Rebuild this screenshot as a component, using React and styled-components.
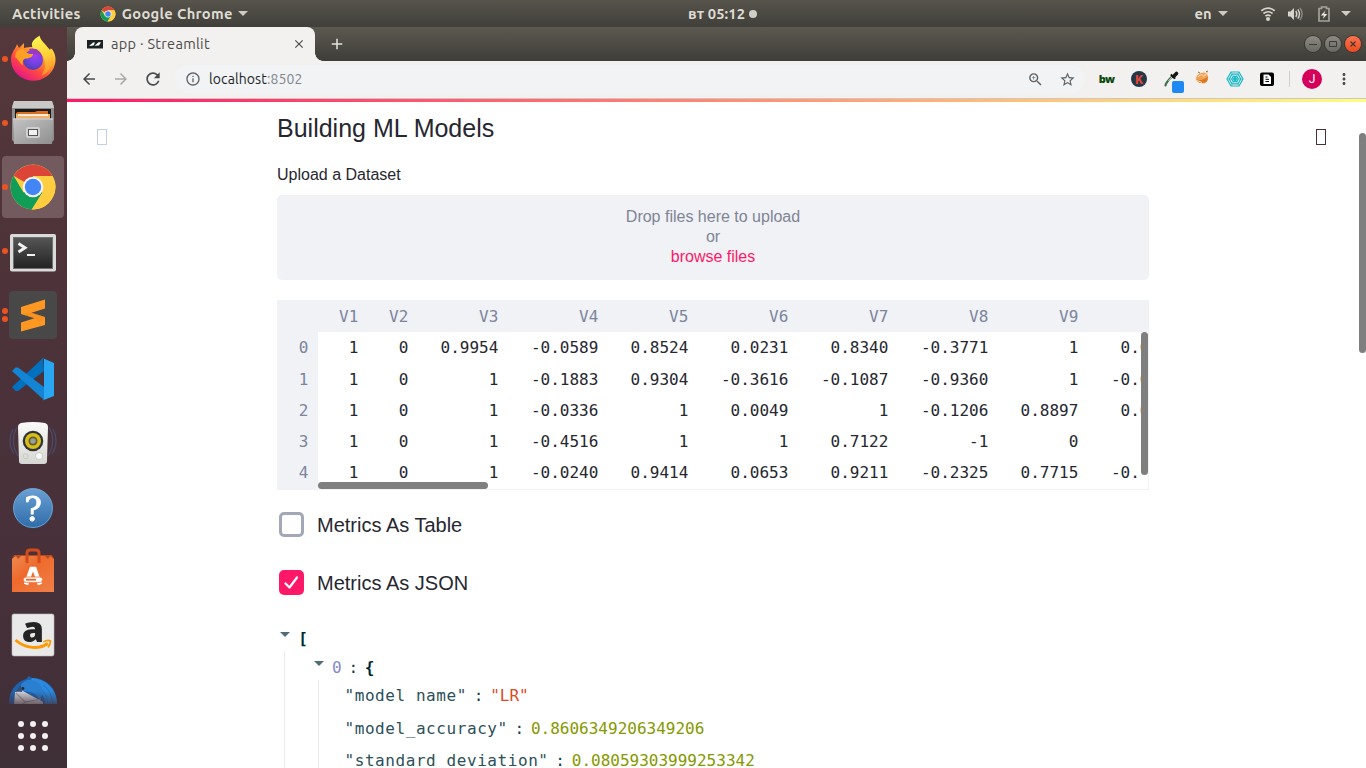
import React from "react";
import styled, { createGlobalStyle } from "styled-components";
import {
  MdArrowBack,
  MdArrowForward,
  MdRefresh,
  MdInfoOutline,
  MdZoomIn,
  MdStarBorder,
  MdMoreVert,
  MdClose,
  MdAdd,
} from "react-icons/md";

const uiFont = `"Ubuntu", "Noto Sans", "Open Sans", sans-serif`;
const bodyFont = `"Liberation Sans", Arial, sans-serif`;
const monoFont = `"DejaVu Sans Mono", monospace`;
const pink = "#ff1868";

const GlobalStyle = createGlobalStyle`
  * { box-sizing: border-box; }
  html, body { margin: 0; padding: 0; overflow: hidden; background: #fff; }
  svg { display: block; flex: none; }
`;

/* ---------- desktop ---------- */

const Desktop = styled.div`
  width: 1366px;
  height: 768px;
  display: flex;
  flex-direction: column;
  overflow: hidden;
`;

const TopBar = styled.header`
  height: 27px;
  flex: none;
  display: grid;
  grid-template-columns: 1fr auto 1fr;
  align-items: center;
  padding: 0 15px 0 12px;
  background: linear-gradient(#56544b, #403f3a);
  color: #dfdbd2;
  font: 600 14.7px/27px ${uiFont};
`;

const BarGroup = styled.div`
  display: flex;
  align-items: center;
  justify-content: ${(p) => (p.$end ? "flex-end" : "flex-start")};
  white-space: nowrap;
`;

const BarText = styled.span`
  margin-left: ${(p) => p.$left || 0}px;
  letter-spacing: ${(p) => p.$track || 0}px;
`;

const DownArrow = styled.i`
  width: 0;
  height: 0;
  border: 5px solid transparent;
  border-top-color: #d0ccc4;
  border-bottom: 0;
  margin-left: ${(p) => p.$left || 0}px;
`;

const Clock = styled.div`
  display: flex;
  align-items: center;
  gap: 4px;
  white-space: nowrap;
  margin-left: 82px;
  letter-spacing: 0.1px;
`;

const ClockDot = styled.i`
  width: 8px;
  height: 8px;
  border-radius: 50%;
  background: #d0cec9;
`;

const StatusIcons = styled.div`
  display: flex;
  align-items: center;
  gap: 12.5px;
  margin-left: 32px;
`;

const Main = styled.div`
  flex: 1;
  min-height: 0;
  display: flex;
`;

/* ---------- dock ---------- */

const Dock = styled.nav`
  width: 67px;
  flex: none;
  display: flex;
  flex-direction: column;
  background: linear-gradient(#54383b, #4e3339 30%, #46303a 78%, #3f2f36);
`;

const DockList = styled.div`
  height: 677px;
  overflow: hidden;
  display: flex;
  flex-direction: column;
  mask-image: linear-gradient(#000 664px, rgba(0, 0, 0, 0.3));
`;

const DockItem = styled.div`
  height: 64px;
  flex: none;
  display: flex;
  align-items: center;
  padding: 1px 3px 1px 2px;
`;

const DockTile = styled.div`
  height: 62px;
  flex: 1;
  display: flex;
  align-items: center;
  border-radius: 4px;
  background: ${(p) => (p.$active ? "#725a5f" : "transparent")};
`;

const Running = styled.span`
  width: 7px;
  display: flex;
  flex-direction: column;
  gap: 2px;
`;

const RunDot = styled.i`
  width: 6px;
  height: 6px;
  border-radius: 50%;
  background: #e95420;
`;

const AppsButton = styled.div`
  flex: 1;
  display: grid;
  grid-template-columns: repeat(3, 6px);
  grid-auto-rows: 6px;
  gap: 6px;
  justify-content: center;
  align-content: center;
  padding-right: 1px;
`;

const AppsDot = styled.i`
  border-radius: 50%;
  background: #f2f1f0;
`;

/* ---------- browser window ---------- */

const Window = styled.div`
  flex: 1;
  min-width: 0;
  display: flex;
  flex-direction: column;
`;

const TabStrip = styled.div`
  height: 34px;
  flex: none;
  display: flex;
  align-items: center;
  padding: 0 5px 0 8px;
  background: linear-gradient(#5c5950, #3e3d38);
`;

const Tab = styled.div`
  position: relative;
  width: 240px;
  height: 34px;
  display: flex;
  align-items: center;
  padding: 0 9px 0 12px;
  border-radius: 8px 8px 0 0;
  background: #f2f1f0;
  color: #4c4c4a;
  font: 14.5px/34px ${uiFont};

  &::before,
  &::after {
    content: "";
    position: absolute;
    bottom: 0;
    width: 8px;
    height: 8px;
  }
  &::before {
    left: -8px;
    background: radial-gradient(circle at 0 0, transparent 7.5px, #f2f1f0 8px);
  }
  &::after {
    right: -8px;
    background: radial-gradient(circle at 100% 0, transparent 7.5px, #f2f1f0 8px);
  }
`;

const TabTitle = styled.span`
  flex: 1;
  margin-left: 8px;
  letter-spacing: 0.3px;
`;

const NewTab = styled.div`
  flex: 1;
  padding-left: 13px;
  color: #e6e4e0;
`;

const WindowButtons = styled.div`
  display: flex;
  gap: 4px;
`;

const WindowButton = styled.span`
  width: 16px;
  height: 16px;
  border-radius: 50%;
  display: flex;
  align-items: center;
  justify-content: center;
  color: #3b3a36;
  background: ${(p) => (p.$close ? "linear-gradient(#fa7450, #ee4a1c)" : "linear-gradient(#8c8a82, #6b6963)")};
  box-shadow: 0 0 0 1px #373632;
`;

const Toolbar = styled.div`
  height: 38px;
  flex: none;
  display: flex;
  align-items: center;
  padding: 0 13px 1px;
  background: #f2f1f0;
  border-bottom: 1px solid #c9c8c7;
  color: #4b4c4d;
`;

const NavIcons = styled.div`
  display: flex;
  align-items: center;
  gap: 13.5px;
  color: #48494b;
`;

const Faded = styled.span`
  color: #a9a9a9;
`;

const Omnibox = styled.div`
  width: 910px;
  flex: none;
  height: 28px;
  margin-left: 12px;
  padding: 0 9.5px 0 10px;
  border-radius: 14px;
  display: flex;
  align-items: center;
  gap: 8px;
  background: #f1f3f5;
  color: #5f6368;
  font: 14px/28px ${uiFont};
`;

const Address = styled.span`
  flex: 1;
  color: #222427;
  letter-spacing: 0.1px;
`;

const Port = styled.span`
  color: #80858b;
`;

const OmniActions = styled.div`
  display: flex;
  gap: 15px;
`;

const Extensions = styled.div`
  display: flex;
  align-items: center;
  gap: 12px;
  margin-left: 12px;
`;

const Avatar = styled.span`
  width: 20px;
  height: 20px;
  margin-right: 13px;
  border-radius: 50%;
  background: #d5005a;
  color: #fff;
  font: 12px/20px Roboto, sans-serif;
  text-align: center;
`;

const Divider = styled.i`
  width: 1px;
  height: 16px;
  margin: 0 12px;
  background: #cfcfcf;
`;

const ProgressLine = styled.div`
  height: 3px;
  flex: none;
  background: linear-gradient(90deg, ${pink}, #fffd80);
`;

/* ---------- page ---------- */

const Page = styled.main`
  position: relative;
  flex: 1;
  min-height: 0;
  overflow: hidden;
  display: flex;
  background: #fff;
  color: #262730;
  font: 16px/24px ${bodyFont};
`;

const PageScroll = styled.i`
  position: absolute;
  right: 0;
  top: 31px;
  width: 7px;
  height: 220px;
  border-radius: 4px;
  background: #7f7f7f;
`;

const MissingGlyph = styled.i`
  width: 10px;
  height: 16px;
  flex: none;
  margin: 27px 0 0 ${(p) => p.$left}px;
  border: 1px solid ${(p) => p.$color};
`;

const Column = styled.section`
  width: 872px;
  flex: none;
  margin-left: 170px;
`;

const Heading = styled.h2`
  margin: 10px 0 0;
  font: 25px/32px ${bodyFont};
`;

const Label = styled.div`
  margin: 19px 0 0;
  line-height: 24px;
`;

const Dropzone = styled.div`
  height: 85px;
  margin-top: 8px;
  padding: 12px 0 0;
  border-radius: 5px;
  background: #f0f2f6;
  color: #808495;
  line-height: 20px;
  text-align: center;
`;

const Browse = styled.div`
  color: ${pink};
`;

const Frame = styled.div`
  position: relative;
  height: 190px;
  margin-top: 20px;
  overflow: hidden;
  border: 1px solid #f0f2f6;
  border-width: 0 1px 1px 0;
  font: 16px/31px ${monoFont};
`;

const FrameRow = styled.div`
  display: grid;
  grid-template-columns: 41px 50px 50px 90px 100px 90px 100px 100px 100px 90px 100px;
  width: 911px;
  height: ${(p) => p.$h || 31}px;
  background: ${(p) => (p.$head ? "#f0f2f6" : "#fff")};
  color: ${(p) => (p.$head ? "#7c859c" : "#262730")};
  ${(p) => p.$head && "line-height: 33px;"}
`;

const FrameCell = styled.span`
  padding-right: 9.7px;
  text-align: right;
  ${(p) => p.$index && "background: #f0f2f6; color: #7c859c;"}
`;

const Scrollbar = styled.div`
  position: absolute;
  background: #fff;
  ${(p) =>
    p.$vertical
      ? "right: 0; top: 32px; width: 7px; height: 150px;"
      : "left: 41px; right: 0; bottom: 0; height: 7px;"}
`;

const Thumb = styled.i`
  display: block;
  width: ${(p) => p.$w}px;
  height: ${(p) => p.$h}px;
  border-radius: 4px;
  background: #7f7f7f;
`;

const CheckRow = styled.label`
  display: flex;
  align-items: center;
  gap: 13px;
  height: 25px;
  margin: ${(p) => p.$top}px 0 0 2px;
  font-size: 20px;
`;

const CheckBox = styled.span`
  width: 25px;
  height: 25px;
  border-radius: 5px;
  display: flex;
  align-items: center;
  justify-content: center;
  border: ${(p) => (p.$on ? "0" : "3px solid #a3a8b8")};
  background: ${(p) => (p.$on ? pink : "#fff")};
`;

const Tree = styled.div`
  margin: 29px 0 0 3px;
  font: 16px/28px ${monoFont};
`;

const TreeLine = styled.div`
  display: flex;
  height: ${(p) => p.$h || 28}px;
  line-height: ${(p) => p.$lh || p.$h}px;
  white-space: pre;
`;

const TreeNest = styled.div`
  margin-left: 4px;
  padding-left: ${(p) => p.$pad}px;
  border-left: 1px solid #ebebeb;
`;

const Caret = styled.i`
  width: 0;
  height: 0;
  margin: ${(p) => p.$top}px ${(p) => p.$right}px 0 0;
  border: 5px solid transparent;
  border-top-color: #516d74;
  border-bottom: 0;
`;

const Brace = styled.b`
  color: #002b36;
`;

const Colon = styled.span`
  width: 23.2px;
  text-align: center;
  color: #12404c;
`;

const Key = styled.span`
  letter-spacing: 0.57px;
  color: #2c4f59;
`;

const Value = styled.span`
  color: ${(p) => (p.$kind === "string" ? "#dc4a1e" : p.$kind === "index" ? "#8488cf" : "#859900")};
`;

/* ---------- drawings ---------- */

function ChromeIcon({ size }) {
  return (
    <svg width={size} height={size} viewBox="0 0 48 48">
      <circle cx="24" cy="24" r="22.5" fill="#ffcd40" />
      <path d="M24 24 4.6 12.8A22.5 22.5 0 0 1 43.5 13H24z" fill="#db4437" />
      <path d="M4.6 12.8A22.5 22.5 0 0 0 22.8 46.4L33.5 29.5 24 24 14.5 29.5z" fill="#0f9d58" />
      <path d="M24 13h19.5A22.5 22.5 0 0 1 22.8 46.4L33.5 29.5z" fill="#ffcd40" />
      <circle cx="24" cy="24" r="10.3" fill="#f4f4f4" />
      <circle cx="24" cy="24" r="8.2" fill="#4285f4" />
    </svg>
  );
}

function FirefoxIcon() {
  return (
    <svg width="48" height="48" viewBox="0 0 48 48">
      <defs>
        <linearGradient id="ffBody" x1="0.85" y1="0.1" x2="0.25" y2="0.95">
          <stop offset="0" stopColor="#fff44f" />
          <stop offset="0.35" stopColor="#ffa22c" />
          <stop offset="0.68" stopColor="#ff4a3f" />
          <stop offset="1" stopColor="#e5168a" />
        </linearGradient>
        <linearGradient id="ffTail" x1="0.4" y1="0" x2="0.7" y2="1">
          <stop offset="0" stopColor="#fff44f" />
          <stop offset="0.5" stopColor="#ffd23a" />
          <stop offset="1" stopColor="#ff8a28" />
        </linearGradient>
        <radialGradient id="ffGlobe" cx="0.6" cy="0.3" r="0.75">
          <stop offset="0" stopColor="#a43cf0" />
          <stop offset="0.5" stopColor="#7542e5" />
          <stop offset="1" stopColor="#4a3fae" />
        </radialGradient>
      </defs>
      <path
        d="M4 17c1-3 3-4 4-8l2 4 5-5v5c3-1 6-1 9-1 3 0 3-6 6-9 3 6 8 8 11 12l2-1c4 6 4 11 3 15A22.300 21.500 0 0 1 2 26c0-4 0-6 2-9z"
        fill="url(#ffBody)"
      />
      <path d="M23 11c-1-6 5-8 7.500-10.500 1 6 7.500 8.500 10 15.500l1.500-3c6 13 1 23-10 28 6-8 5-16 1-21-3-4-9-4-10-9z" fill="url(#ffTail)" />
      <circle cx="24" cy="25" r="10" fill="url(#ffGlobe)" />
      <path d="M6 22c1-7 4-8 8-8 3 1 2 4 7 5h3c0 3-4 4.500-7 4.500-3 .5-4 3-3 6.500-4-1-4-6-8-8z" fill="#ff9f24" />
      <path d="M20 14c6-2 12 1 14 9-2-3-4-4-8-4-3 0-5-2-6-5z" fill="#9b3aba" />
    </svg>
  );
}

function FilesIcon() {
  return (
    <svg width="48" height="48" viewBox="0 0 48 48">
      <defs>
        <linearGradient id="fileFront" x1="0" y1="0" x2="1" y2="1">
          <stop offset="0" stopColor="#c4c4c4" />
          <stop offset="1" stopColor="#8f8f8f" />
        </linearGradient>
      </defs>
      <path d="M5 2h38l2 5v34l-2 2H5l-2-2V7z" fill="#8d8d8d" />
      <path d="M5 2h38l2 7H3z" fill="#c9c9c9" />
      <path d="M6 10h36v12H6z" fill="#1b1b1b" />
      <path d="M9 13h17l2-1h11v8H7v-6z" fill="#d9701f" />
      <path d="M7 15h34v5H7z" fill="#f0b16a" />
      <path d="M9 15.300h30v1.500H9z" fill="#fff" />
      <path d="M4 19.500h40L43 45H5z" fill="url(#fileFront)" />
      <path d="M4 19.500h40v1H4z" fill="#d8d8d8" />
      <rect x="17" y="28" width="14" height="11" rx="2" fill="#cfcfcf" />
      <rect x="19.500" y="30.500" width="9" height="6" fill="#f1f1f1" stroke="#555" />
    </svg>
  );
}

function TerminalIcon() {
  return (
    <svg width="48" height="48" viewBox="0 0 48 48">
      <defs>
        <linearGradient id="term" x1="0" y1="0" x2="0" y2="1">
          <stop offset="0" stopColor="#555" />
          <stop offset="1" stopColor="#242424" />
        </linearGradient>
      </defs>
      <rect x="1" y="7" width="46" height="37.500" rx="2" fill="#dadada" />
      <rect x="4" y="10" width="40" height="32" fill="#707070" />
      <rect x="5" y="11" width="38" height="30" fill="url(#term)" />
      <path d="M9.500 16.500l6.500 4.300-6.500 4.300" fill="none" stroke="#f2f2f2" strokeWidth="3" />
      <path d="M18 28h8" stroke="#f2f2f2" strokeWidth="2" />
    </svg>
  );
}

function SublimeIcon() {
  return (
    <svg width="48" height="48" viewBox="0 0 48 48">
      <rect width="48" height="48" rx="4" fill="#484848" />
      <path d="M12 16L36 8.500v9L22.500 21.700 36 26v8L12 40.500v-9l13.500-4.200L12 23z" fill="#ff9822" />
      <path d="M22.500 21.700L36 26c0 2-3 4.300-6 4.800l-4.500-3.500L12 23z" fill="#e8841a" opacity="0.35" />
    </svg>
  );
}

function CodeIcon() {
  return (
    <svg width="48" height="48" viewBox="0 0 48 48">
      <path d="M34 3L3 32l3.500 4H9l26-20z" fill="#0070bf" />
      <path d="M3 16l3.500-3.500H9L35 32v13z" fill="#1484d4" />
      <path d="M33.500 3L45 8v33L33.500 45.500c1-.5 1.500-1 1.500-2.500V5c0-1-.5-1.500-1.500-2z" fill="#29a7f2" />
    </svg>
  );
}

function SpeakerIcon() {
  return (
    <svg width="48" height="48" viewBox="0 0 48 48">
      <defs>
        <linearGradient id="spk" x1="0" y1="0" x2="0" y2="1">
          <stop offset="0" stopColor="#fafaf8" />
          <stop offset="1" stopColor="#d6d6d2" />
        </linearGradient>
      </defs>
      <g fill="none" stroke="#4a5680" strokeWidth="1.300" opacity="0.65">
        <path d="M8 8c-5 9-5 19 1 29M4 10c-4 8-4 17 1 25M40 8c5 9 5 19-1 29M44 10c4 8 4 17-1 25" />
      </g>
      <path d="M12 4q12-2 24 0 3 1 3 4l-1 34q0 3-3 3H13q-3 0-3-3L9 8q0-3 3-4z" fill="url(#spk)" />
      <circle cx="24" cy="22" r="10.300" fill="#30323a" />
      <circle cx="24" cy="22" r="8" fill="#d9bd18" />
      <circle cx="24" cy="22" r="4.500" fill="#62602a" />
      <circle cx="24" cy="22" r="2.800" fill="#9c9c9c" />
      <circle cx="30" cy="37" r="3.500" fill="#f8f8f8" stroke="#bbb" strokeWidth="0.700" />
      <rect x="14.500" y="35" width="4.500" height="4.500" rx="1" fill="none" stroke="#c9c9c6" />
    </svg>
  );
}

function HelpIcon() {
  return (
    <svg width="48" height="48" viewBox="0 0 48 48">
      <defs>
        <linearGradient id="help" x1="0" y1="0" x2="0" y2="1">
          <stop offset="0" stopColor="#6aa0d4" />
          <stop offset="1" stopColor="#2f6ca9" />
        </linearGradient>
      </defs>
      <circle cx="24" cy="25.500" r="20" fill="#2c4566" />
      <circle cx="24" cy="25" r="19.500" fill="url(#help)" stroke="#7badd9" strokeWidth="0.800" />
      <text x="24" y="37.500" textAnchor="middle" fontFamily="DejaVu Serif, serif" fontSize="33" fill="#fff" stroke="#fff" strokeWidth="0.900">?</text>
    </svg>
  );
}

function SoftwareIcon() {
  return (
    <svg width="48" height="48" viewBox="0 0 48 48">
      <defs>
        <linearGradient id="bag" x1="0" y1="0" x2="1" y2="1">
          <stop offset="0" stopColor="#ef8a50" />
          <stop offset="0.4" stopColor="#ee6a2c" />
          <stop offset="1" stopColor="#f08048" />
        </linearGradient>
      </defs>
      <path d="M5 8h38l2 4H3z" fill="#b94a1e" />
      <path d="M3 12l4-3 2 3 3-3h24l3 3 2-3 4 3v33H3z" fill="url(#bag)" />
      <path d="M18 16V6q0-3 3-3h6q3 0 3 3v10" fill="none" stroke="#d24c1b" strokeWidth="3" />
      <path d="M17 37.500L22.500 22h3L31 37.500" fill="none" stroke="#fff" strokeWidth="4.400" />
      <rect x="14.500" y="30" width="19" height="5.400" rx="2.700" fill="#fff" stroke="#ef7438" strokeWidth="0.800" />
      <path d="M17 32.700h10" stroke="#e9672d" strokeWidth="1.800" />
    </svg>
  );
}

function AmazonIcon() {
  return (
    <svg width="48" height="48" viewBox="0 0 48 48" overflow="visible">
      <rect x="3" y="3" width="42" height="42" rx="2" fill="#e9e9e9" stroke="#bdbdbd" strokeWidth="0.600" />
      <text x="24" y="31" textAnchor="middle" fontFamily="Open Sans, sans-serif" fontWeight="800" fontSize="36" fill="#242424">a</text>
      <path d="M6.500 29c10 9 24 9.500 32.500 3.500" fill="none" stroke="#ff9900" strokeWidth="3" />
      <path d="M34.500 31q4-2.500 7-1-.2 4-2.500 6.500" fill="none" stroke="#ff9900" strokeWidth="1.800" />
    </svg>
  );
}

function ThunderbirdIcon() {
  return (
    <svg width="48" height="48" viewBox="0 0 48 48">
      <path d="M0 28C0 16 7 7 17 4l3-3 3 2C38 3 48 14 48 28v18H0z" fill="#1e63b0" />
      <path d="M23 3c14 1 24 11 25 24v10H36c2-14-3-22-16-29z" fill="#2b8ae0" />
      <path d="M34 10c6 4 9 10 10 20M30 12c5 4 9 10 9 20" fill="none" stroke="#1f70bd" strokeWidth="0.900" />
      <path d="M6 17l8-1 20 11v18H4z" fill="#d3d4da" />
      <path d="M7 18l9 9 16-3M16 27l-8 8" fill="none" stroke="#9c9ca6" strokeWidth="1.200" />
      <path d="M12 10c5-8 16-6 20 1 3 6 2 10-2 13-3-6-9-8-18-8z" fill="#2b7fd0" />
      <path d="M12 10l-5 6 6 1z" fill="#3b4c6c" />
      <circle cx="14" cy="13.500" r="1.400" fill="#1c2a44" />
    </svg>
  );
}

function WifiIcon() {
  return (
    <svg width="16" height="16" viewBox="0 0 16 16" fill="none" stroke="#d8d4cc" strokeWidth="1.700">
      <path d="M1.300 4.700q6.700-5 13.400 0M3.400 7.500q4.600-3.500 9.200 0M5.400 10.100q2.600-2 5.200 0" />
      <circle cx="8" cy="13" r="2" fill="#d8d4cc" stroke="none" />
    </svg>
  );
}

function VolumeIcon() {
  return (
    <svg width="17" height="16" viewBox="0 0 17 16" fill="none" strokeWidth="1.400">
      <path d="M0 5.500h2.500L6 2v12l-3.500-3.500H0z" fill="#d8d4cc" />
      <path d="M7.800 5q2 3 0 6M9.800 3.300q3.300 4.700 0 9.400" stroke="#d8d4cc" />
      <path d="M12 1.800q4.200 6.200 0 12.400" stroke="#8e8b84" />
    </svg>
  );
}

function BatteryIcon() {
  return (
    <svg width="12" height="16" viewBox="0 0 12 16">
      <path d="M1 2.500h2.500v-1.500h5v1.500H11V15H1z" fill="none" stroke="#a5a29b" strokeWidth="1.700" />
      <path d="M7.500 4.500L2.800 9.500H6L4.800 13l4.500-5H6.200z" fill="#eeeae2" />
    </svg>
  );
}

function StreamlitIcon() {
  return (
    <svg width="16" height="16" viewBox="0 0 16 16">
      <rect y="4" width="16" height="8.500" fill="#1b2322" />
      <path d="M2 10l4-3.500h2L6.500 9.500zM7.500 9.800L11.500 6.300h2.500L12 9.500z" fill="#fff" />
    </svg>
  );
}

function BwIcon() {
  return (
    <svg width="20" height="20" viewBox="0 0 20 20">
      <text x="9.500" y="14" textAnchor="middle" fontFamily="Open Sans, sans-serif" fontWeight="800" fontSize="11" letterSpacing="-0.7" fill="#0d4a0d">bw</text>
    </svg>
  );
}

function KIcon() {
  return (
    <svg width="20" height="20" viewBox="0 0 20 20">
      <circle cx="10" cy="10" r="8" fill="#243747" />
      <text x="10" y="14.600" textAnchor="middle" fontFamily="Liberation Mono, monospace" fontWeight="700" fontSize="13.500" fill="#e2473c">K</text>
    </svg>
  );
}

function DropperIcon() {
  return (
    <svg width="20" height="20" viewBox="0 0 20 20" overflow="visible">
      <path d="M4.500 16.500q0-2.500 6.500-9" fill="none" stroke="#3f6f50" strokeWidth="2.200" strokeLinecap="round" />
      <path d="M7.500 12l4-4.500" stroke="#cfe0d2" strokeWidth="1" />
      <path d="M12.500 7.500l3-3" stroke="#151515" strokeWidth="3.600" strokeLinecap="round" />
      <path d="M9.800 5.500l4.400 4.200" stroke="#151515" strokeWidth="1.800" />
      <rect x="11" y="12" width="12" height="12" rx="2" fill="#1e88f5" />
    </svg>
  );
}

function BowlIcon() {
  return (
    <svg width="20" height="20" viewBox="0 0 20 20">
      <path d="M3 9q1-5 8-5.500 5 1 4 7-1 4-5.500 4-5.500-1-6.500-5.500z" fill="#f0a050" />
      <path d="M3 10q4 3 12-2-1 6.500-6.500 6-4 0-5.500-4z" fill="#dc7420" />
      <path d="M5 8q2-3 5-2m0 2l5-5M4 11.500l5 2" stroke="#f8d9ae" fill="none" strokeWidth="1.200" />
      <path d="M13 3l2-1M5 3l2 1" stroke="#5b3317" strokeWidth="0.700" />
    </svg>
  );
}

function WebIcon() {
  return (
    <svg width="20" height="20" viewBox="0 0 20 20" fill="none" stroke="#18b8c4" strokeWidth="1.200">
      <path d="M6 3h8l4 7-4 7H6l-4-7zM7 5.200h6l2.700 4.800-2.700 4.800H7L4.300 10zM8.200 7.300h3.600L13.300 10l-1.500 2.700H8.200L6.700 10z" />
      <path d="M2 10h16M6 3l8 14M14 3L6 17" strokeWidth="0.600" />
      <circle cx="10" cy="10" r="1.300" fill="#18b8c4" />
    </svg>
  );
}

function PageIcon() {
  return (
    <svg width="20" height="20" viewBox="0 0 20 20">
      <rect x="3" y="3.500" width="14" height="13.500" rx="2" fill="#000" />
      <path d="M6.500 5.500h5l2.500 2.500v7H6.500z" fill="#fff" />
      <path d="M8.500 8h2M8.500 10.300h3.500M8.500 12.500h3.500" stroke="#000" strokeWidth="1" />
    </svg>
  );
}

/* ---------- data ---------- */

const dockApps = [
  { icon: <FirefoxIcon />, dots: 1 },
  { icon: <FilesIcon />, dots: 1 },
  { icon: <ChromeIcon size={48} />, dots: 1, active: true },
  { icon: <TerminalIcon />, dots: 1 },
  { icon: <SublimeIcon />, dots: 2 },
  { icon: <CodeIcon />, dots: 0 },
  { icon: <SpeakerIcon />, dots: 0 },
  { icon: <HelpIcon />, dots: 0 },
  { icon: <SoftwareIcon />, dots: 0 },
  { icon: <AmazonIcon />, dots: 0 },
  { icon: <ThunderbirdIcon />, dots: 0 },
];

const columns = ["V1", "V2", "V3", "V4", "V5", "V6", "V7", "V8", "V9"];

const rows = [
  ["1", "0", "0.9954", "-0.0589", "0.8524", "0.0231", "0.8340", "-0.3771", "1", "0.0376"],
  ["1", "0", "1", "-0.1883", "0.9304", "-0.3616", "-0.1087", "-0.9360", "1", "-0.0455"],
  ["1", "0", "1", "-0.0336", "1", "0.0049", "1", "-0.1206", "0.8897", "0.0120"],
  ["1", "0", "1", "-0.4516", "1", "1", "0.7122", "-1", "0", "0"],
  ["1", "0", "1", "-0.0240", "0.9414", "0.0653", "0.9211", "-0.2325", "0.7715", "-0.1640"],
];

const rowHeights = [32, 31, 31, 31, 33];

const metrics = [
  { name: `"model name"`, value: `"LR"`, kind: "string", h: 29, lh: 31 },
  { name: `"model_accuracy"`, value: "0.8606349206349206", h: 36, lh: 40 },
  { name: `"standard deviation"`, value: "0.08059303999253342", h: 29, lh: 31 },
];

export default function App() {
  return (
    <Desktop>
      <GlobalStyle />
      <TopBar>
        <BarGroup>
          <BarText $track={0.34}>Activities</BarText>
          <BarText $left={19} />
          <ChromeIcon size={16} />
          <BarText $left={6} $track={0.32}>Google Chrome</BarText>
          <DownArrow $left={5} />
        </BarGroup>
        <Clock>
          <span>вт 05:12</span>
          <ClockDot />
        </Clock>
        <BarGroup $end>
          <BarText>en</BarText>
          <DownArrow $left={6} />
          <StatusIcons>
            <WifiIcon />
            <VolumeIcon />
            <BatteryIcon />
            <DownArrow $left={-1} />
          </StatusIcons>
        </BarGroup>
      </TopBar>
      <Main>
        <Dock>
          <DockList>
            {dockApps.map((app, i) => (
              <DockItem key={i}>
                <DockTile $active={app.active}>
                  <Running>
                    {Array.from({ length: app.dots }, (_, d) => (
                      <RunDot key={d} />
                    ))}
                  </Running>
                  {app.icon}
                </DockTile>
              </DockItem>
            ))}
          </DockList>
          <AppsButton>
            {Array.from({ length: 9 }, (_, d) => (
              <AppsDot key={d} />
            ))}
          </AppsButton>
        </Dock>
        <Window>
          <TabStrip>
            <Tab>
              <StreamlitIcon />
              <TabTitle>app · Streamlit</TabTitle>
              <MdClose size={14} />
            </Tab>
            <NewTab>
              <MdAdd size={18} />
            </NewTab>
            <WindowButtons>
              <WindowButton>
                <svg width="10" height="10" stroke="currentColor"><path d="M1 5.500h8" /></svg>
              </WindowButton>
              <WindowButton>
                <svg width="10" height="10" stroke="currentColor" fill="none"><path d="M1.500 2.500h7v5h-7z" /></svg>
              </WindowButton>
              <WindowButton $close>
                <svg width="10" height="10" stroke="currentColor" strokeWidth="1.200"><path d="M2.500 2.500l5 5M7.500 2.500l-5 5" /></svg>
              </WindowButton>
            </WindowButtons>
          </TabStrip>
          <Toolbar>
            <NavIcons>
              <MdArrowBack size={18} />
              <Faded><MdArrowForward size={18} /></Faded>
              <MdRefresh size={20} />
            </NavIcons>
            <Omnibox>
              <MdInfoOutline size={16} />
              <Address>localhost<Port>:8502</Port></Address>
              <OmniActions>
                <MdZoomIn size={17} />
                <MdStarBorder size={17} />
              </OmniActions>
            </Omnibox>
            <Extensions>
              <BwIcon />
              <KIcon />
              <DropperIcon />
              <BowlIcon />
              <WebIcon />
              <PageIcon />
            </Extensions>
            <Divider />
            <Avatar>J</Avatar>
            <MdMoreVert size={18} />
          </Toolbar>
          <ProgressLine />
          <Page>
            <MissingGlyph $color="#bfd0e0" $left={30} />
            <Column>
              <Heading>Building ML Models</Heading>
              <Label>Upload a Dataset</Label>
              <Dropzone>
                <div>Drop files here to upload</div>
                <div>or</div>
                <Browse>browse files</Browse>
              </Dropzone>
              <Frame>
                <FrameRow $head $h={32}>
                  <FrameCell />
                  {columns.map((c) => (
                    <FrameCell key={c}>{c}</FrameCell>
                  ))}
                  <FrameCell />
                </FrameRow>
                {rows.map((row, i) => (
                  <FrameRow key={i} $h={rowHeights[i]}>
                    <FrameCell $index>{i}</FrameCell>
                    {row.map((v, j) => (
                      <FrameCell key={j}>{v}</FrameCell>
                    ))}
                  </FrameRow>
                ))}
                <Scrollbar>
                  <Thumb $w={170} $h={7} />
                </Scrollbar>
                <Scrollbar $vertical>
                  <Thumb $w={7} $h={143} />
                </Scrollbar>
              </Frame>
              <CheckRow $top={22}>
                <CheckBox />
                Metrics As Table
              </CheckRow>
              <CheckRow $top={33}>
                <CheckBox $on>
                  <svg width="17" height="17" viewBox="0 0 17 17" fill="none" stroke="#fff" strokeWidth="2.200" strokeLinecap="round" strokeLinejoin="round">
                    <path d="M2.500 9.500l4 4L14 3.500" />
                  </svg>
                </CheckBox>
                Metrics As JSON
              </CheckRow>
              <Tree>
                <TreeLine $h={27} $lh={29}>
                  <Caret $top={8} $right={8.3} />
                  <Brace>[</Brace>
                </TreeLine>
                <TreeNest $pad={29}>
                  <TreeLine $h={29} $lh={33}>
                    <Caret $top={10} $right={8} />
                    <Value $kind="index">0</Value>
                    <Colon>:</Colon>
                    <Brace>{"{"}</Brace>
                  </TreeLine>
                  <TreeNest $pad={25.5}>
                    {metrics.map((m) => (
                      <TreeLine key={m.name} $h={m.h} $lh={m.lh}>
                        <Key>{m.name}</Key>
                        <Colon>:</Colon>
                        <Value $kind={m.kind}>{m.value}</Value>
                      </TreeLine>
                    ))}
                  </TreeNest>
                </TreeNest>
              </Tree>
            </Column>
            <MissingGlyph $color="#4a3038" $left={167} />
            <PageScroll />
          </Page>
        </Window>
      </Main>
    </Desktop>
  );
}
